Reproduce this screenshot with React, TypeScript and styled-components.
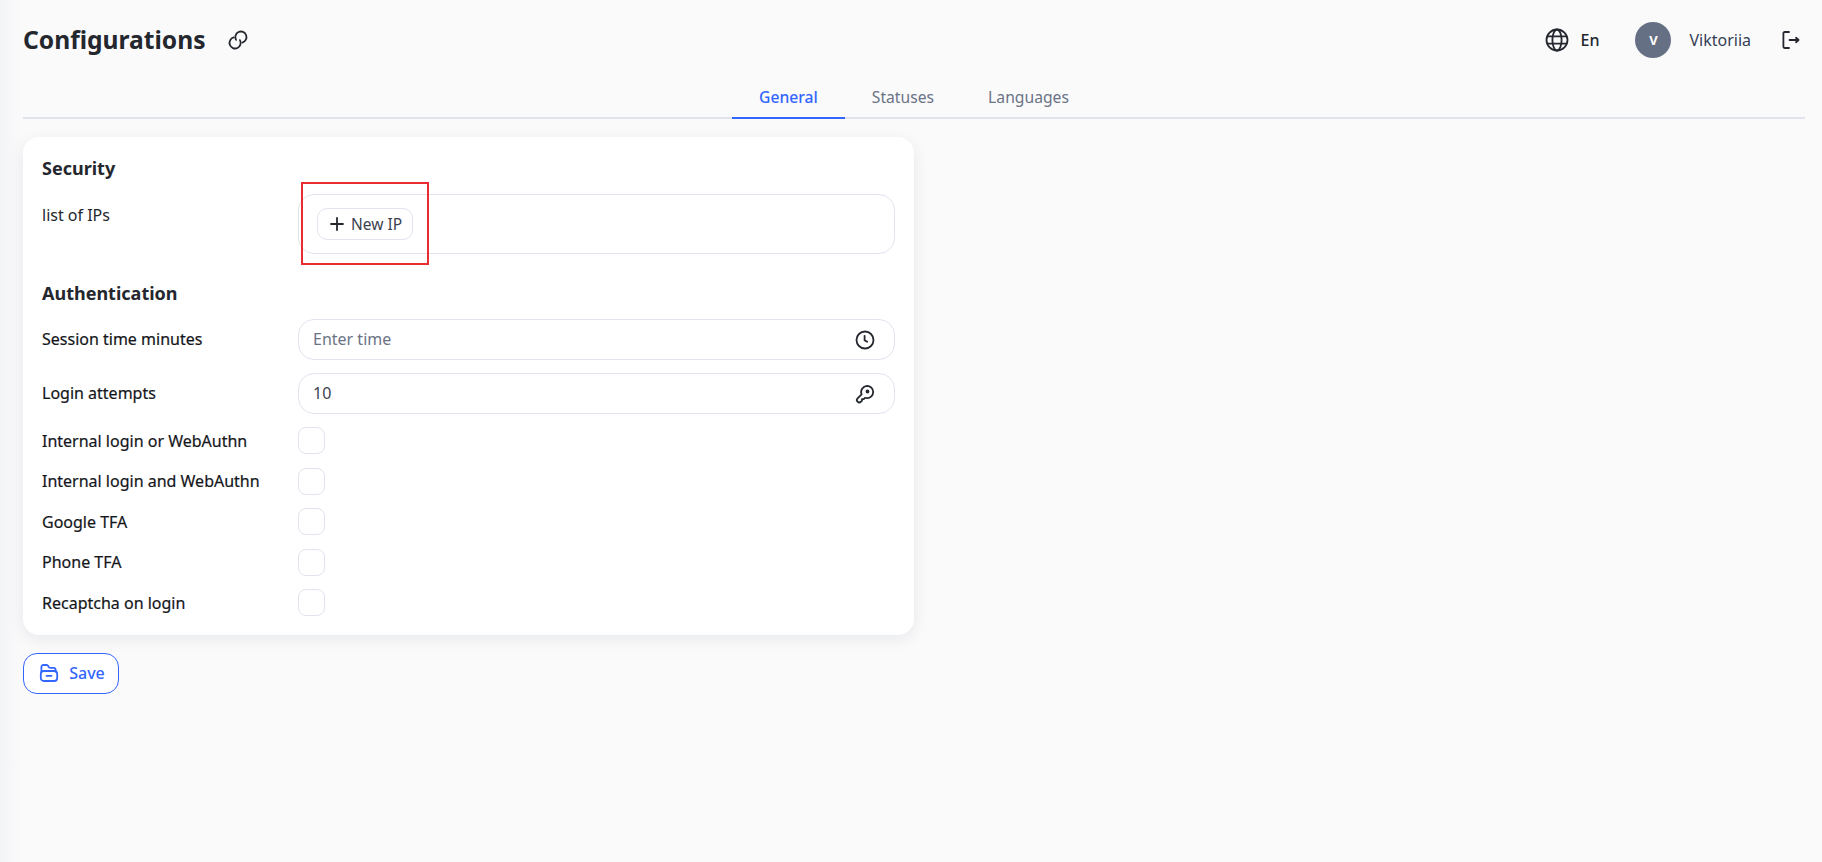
import React from "react";
import styled, { createGlobalStyle } from "styled-components";

const GlobalStyle = createGlobalStyle`
  html, body {
    margin: 0;
    padding: 0;
    background: #fafafb;
    font-family: "Noto Sans", "Open Sans", sans-serif;
    color: #24272d;
  }
  * { box-sizing: border-box; }
`;

const Page = styled.div`
  height: 862px;
  padding: 0 17px 0 23px;
  overflow: hidden;
  background: linear-gradient(90deg, #f3f4f6 0, #f8f8fa 14px, #fafafb 23px);
`;

const Header = styled.header`
  height: 80px;
  display: flex;
  align-items: center;
`;

const Title = styled.h1`
  margin: 0 22px 0 0;
  font-size: 24.6px;
  line-height: 32px;
  font-weight: 700;
  color: #24272d;
`;

const UserBar = styled.div`
  margin-left: auto;
  display: flex;
  align-items: center;
  padding-right: 4px;
`;

const LangLabel = styled.span`
  margin: 0 36px 0 11px;
  font-size: 16px;
  font-weight: 500;
`;

const Avatar = styled.div`
  width: 36px;
  height: 36px;
  border-radius: 50%;
  background: #667085;
  color: #fff;
  display: flex;
  align-items: center;
  justify-content: center;
  font-size: 13px;
  font-weight: 700;
`;

const UserName = styled.span`
  margin: 0 30px 0 18px;
  font-size: 16px;
  color: #344054;
`;

const TabBar = styled.nav`
  display: flex;
  justify-content: center;
  height: 39px;
  border-bottom: 2px solid #e1e4ee;
`;

const Tab = styled.div<{ $active?: boolean }>`
  padding: 0 27px;
  height: 39px;
  line-height: 34px;
  font-size: 15.7px;
  font-weight: ${p => (p.$active ? 500 : 400)};
  color: ${p => (p.$active ? "#3366ff" : "#6b7385")};
  border-bottom: 2px solid ${p => (p.$active ? "#3366ff" : "transparent")};
`;

const Card = styled.section`
  margin-top: 18px;
  width: 891px;
  height: 498px;
  padding: 19px 19px 0;
  background: #fff;
  border-radius: 16px;
  box-shadow: 0 4px 16px rgba(16, 24, 40, 0.08);
`;

const SectionTitle = styled.h2`
  margin: 0;
  font-size: 18px;
  line-height: 24px;
  font-weight: 700;
  color: #24272d;
`;

const IpRow = styled.div`
  margin-top: 14px;
  height: 60px;
  display: grid;
  grid-template-columns: 256px 1fr;
`;

const IpLabel = styled.div`
  font-size: 16px;
  line-height: 20px;
  padding-top: 11px;
  color: #24272d;
`;

const IpBox = styled.div`
  border: 1px solid #e1e4ee;
  border-radius: 16px;
  padding: 13px 18px;
`;

const AddButton = styled.button`
  height: 32px;
  width: 96px;
  display: flex;
  align-items: center;
  justify-content: center;
  gap: 7px;
  padding: 0 0 0 2px;
  background: #fff;
  border: 1px solid #e1e4ee;
  border-radius: 10px;
  font-family: inherit;
  font-size: 15.5px;
  color: #3c4250;
`;

const Highlight = styled.div`
  position: absolute;
  left: 301px;
  top: 182px;
  width: 128px;
  height: 83px;
  border: 2px solid #ea2c30;
  pointer-events: none;
`;

const AuthTitle = styled(SectionTitle)`
  margin-top: 27px;
  margin-bottom: 14px;
`;

const FieldRow = styled.div`
  display: grid;
  grid-template-columns: 256px 1fr;
  align-items: center;
  height: 41px;
  margin-bottom: 13px;
`;

const CheckRow = styled.div`
  display: grid;
  grid-template-columns: 256px 1fr;
  align-items: center;
  height: 27px;
  margin-bottom: 13.6px;
`;

const Label = styled.div`
  font-size: 16px;
  font-weight: 400;
  color: #14161a;
  -webkit-text-stroke: 0.2px #14161a;
`;

const FieldLabel = styled(Label)`
  padding-bottom: 2px;
`;

const InputBox = styled.div`
  height: 41px;
  display: flex;
  align-items: center;
  justify-content: space-between;
  padding: 0 19px 0 14px;
  border: 1px solid #e1e4ee;
  border-radius: 16px;
`;

const InputText = styled.span<{ $placeholder?: boolean }>`
  font-size: 16px;
  padding-bottom: 2px;
  color: ${p => (p.$placeholder ? "#6b7385" : "#3c4250")};
`;

const CheckBox = styled.div`
  width: 27px;
  height: 27px;
  border: 1px solid #e1e4ee;
  border-radius: 8px;
  background: #fff;
`;

const SaveButton = styled.button`
  margin-top: 18px;
  width: 96px;
  height: 41px;
  display: flex;
  align-items: center;
  justify-content: center;
  gap: 10px;
  background: #fff;
  border: 1px solid #3366ff;
  border-radius: 14px;
  padding: 0 0 1px 2px;
  font-family: inherit;
  font-size: 16px;
  font-weight: 500;
  color: #3366ff;
`;

const Icon = styled.svg`
  display: block;
  flex: none;
  fill: none;
  stroke: currentColor;
  stroke-width: 1.8;
  stroke-linecap: round;
  stroke-linejoin: round;
`;

const DarkIcon = styled(Icon)`
  color: #24272d;
`;

const LinkIcon = () => (
  <Icon width="20" height="20" viewBox="0 0 20 20">
    <path d="M8.05 9.9A5.6 5.6 0 1 1 14.35 12.51" />
    <path d="M11.95 10.1A5.6 5.6 0 1 1 5.65 7.49" />
  </Icon>
);

const GlobeIcon = () => (
  <Icon width="24" height="24" viewBox="0 0 24 24">
    <circle cx="12" cy="12" r="10.5" />
    <ellipse cx="12" cy="12" rx="4.6" ry="10.5" />
    <path d="M2.4 8.3h19.2M2.4 15.7h19.2" />
  </Icon>
);

const LogoutIcon = () => (
  <Icon width="20" height="20" viewBox="0 0 20 20">
    <path d="M8 2H3.6A1.2 1.2 0 0 0 2.4 3.2v13.6A1.2 1.2 0 0 0 3.6 18H8" />
    <path d="M8.5 10h9M15 7.8l2.6 2.2L15 12.2" />
  </Icon>
);

const PlusIcon = () => (
  <DarkIcon width="14" height="14" viewBox="0 0 14 14">
    <path d="M7 1v12M1 7h12" />
  </DarkIcon>
);

const ClockIcon = () => (
  <Icon width="20" height="20" viewBox="0 0 20 20">
    <circle cx="10" cy="10" r="8.5" />
    <path d="M9.6 5.8v4.4l2.6 1.6" />
  </Icon>
);

const KeyIcon = () => (
  <Icon width="20" height="20" viewBox="0 0 20 20">
    <path d="M12 1.8a6.2 6.2 0 1 1 0 12.4c-.7 0-1.4-.1-2-.4l-1.3 1.3H7v1.6l-1 1a2.4 2.4 0 0 1-3.4-3.4l4-4a6.2 6.2 0 0 1 5.4-8.5z" />
    <circle cx="12.5" cy="7.5" r="1" fill="currentColor" />
  </Icon>
);

const SaveIcon = () => (
  <Icon width="20" height="20" viewBox="0 0 20 20">
    <path d="M2.4 8.5V4a2 2 0 0 1 2-2h3c.6 0 1.2.3 1.6.8l1 1.4c.3.4.7.6 1.2.6h3.4a2 2 0 0 1 2 2v1.7" />
    <rect x="1.8" y="8" width="16.4" height="10" rx="3" />
    <path d="M7.5 12.8h5" />
  </Icon>
);

export default function App() {
  return (
    <Page>
      <GlobalStyle />
      <Header>
        <Title>Configurations</Title>
        <LinkIcon />
        <UserBar>
          <GlobeIcon />
          <LangLabel>En</LangLabel>
          <Avatar>V</Avatar>
          <UserName>Viktoriia</UserName>
          <LogoutIcon />
        </UserBar>
      </Header>
      <TabBar>
        <Tab $active>General</Tab>
        <Tab>Statuses</Tab>
        <Tab>Languages</Tab>
      </TabBar>
      <Card>
        <SectionTitle>Security</SectionTitle>
        <IpRow>
          <IpLabel>list of IPs</IpLabel>
          <IpBox>
            <AddButton><PlusIcon />New IP</AddButton>
          </IpBox>
        </IpRow>
        <AuthTitle>Authentication</AuthTitle>
        <FieldRow>
          <FieldLabel>Session time minutes</FieldLabel>
          <InputBox>
            <InputText $placeholder>Enter time</InputText>
            <ClockIcon />
          </InputBox>
        </FieldRow>
        <FieldRow>
          <FieldLabel>Login attempts</FieldLabel>
          <InputBox>
            <InputText>10</InputText>
            <KeyIcon />
          </InputBox>
        </FieldRow>
        {["Internal login or WebAuthn", "Internal login and WebAuthn", "Google TFA", "Phone TFA", "Recaptcha on login"].map(name => (
          <CheckRow key={name}>
            <Label>{name}</Label>
            <CheckBox />
          </CheckRow>
        ))}
      </Card>
      <SaveButton><SaveIcon />Save</SaveButton>
      <Highlight />
    </Page>
  );
}
